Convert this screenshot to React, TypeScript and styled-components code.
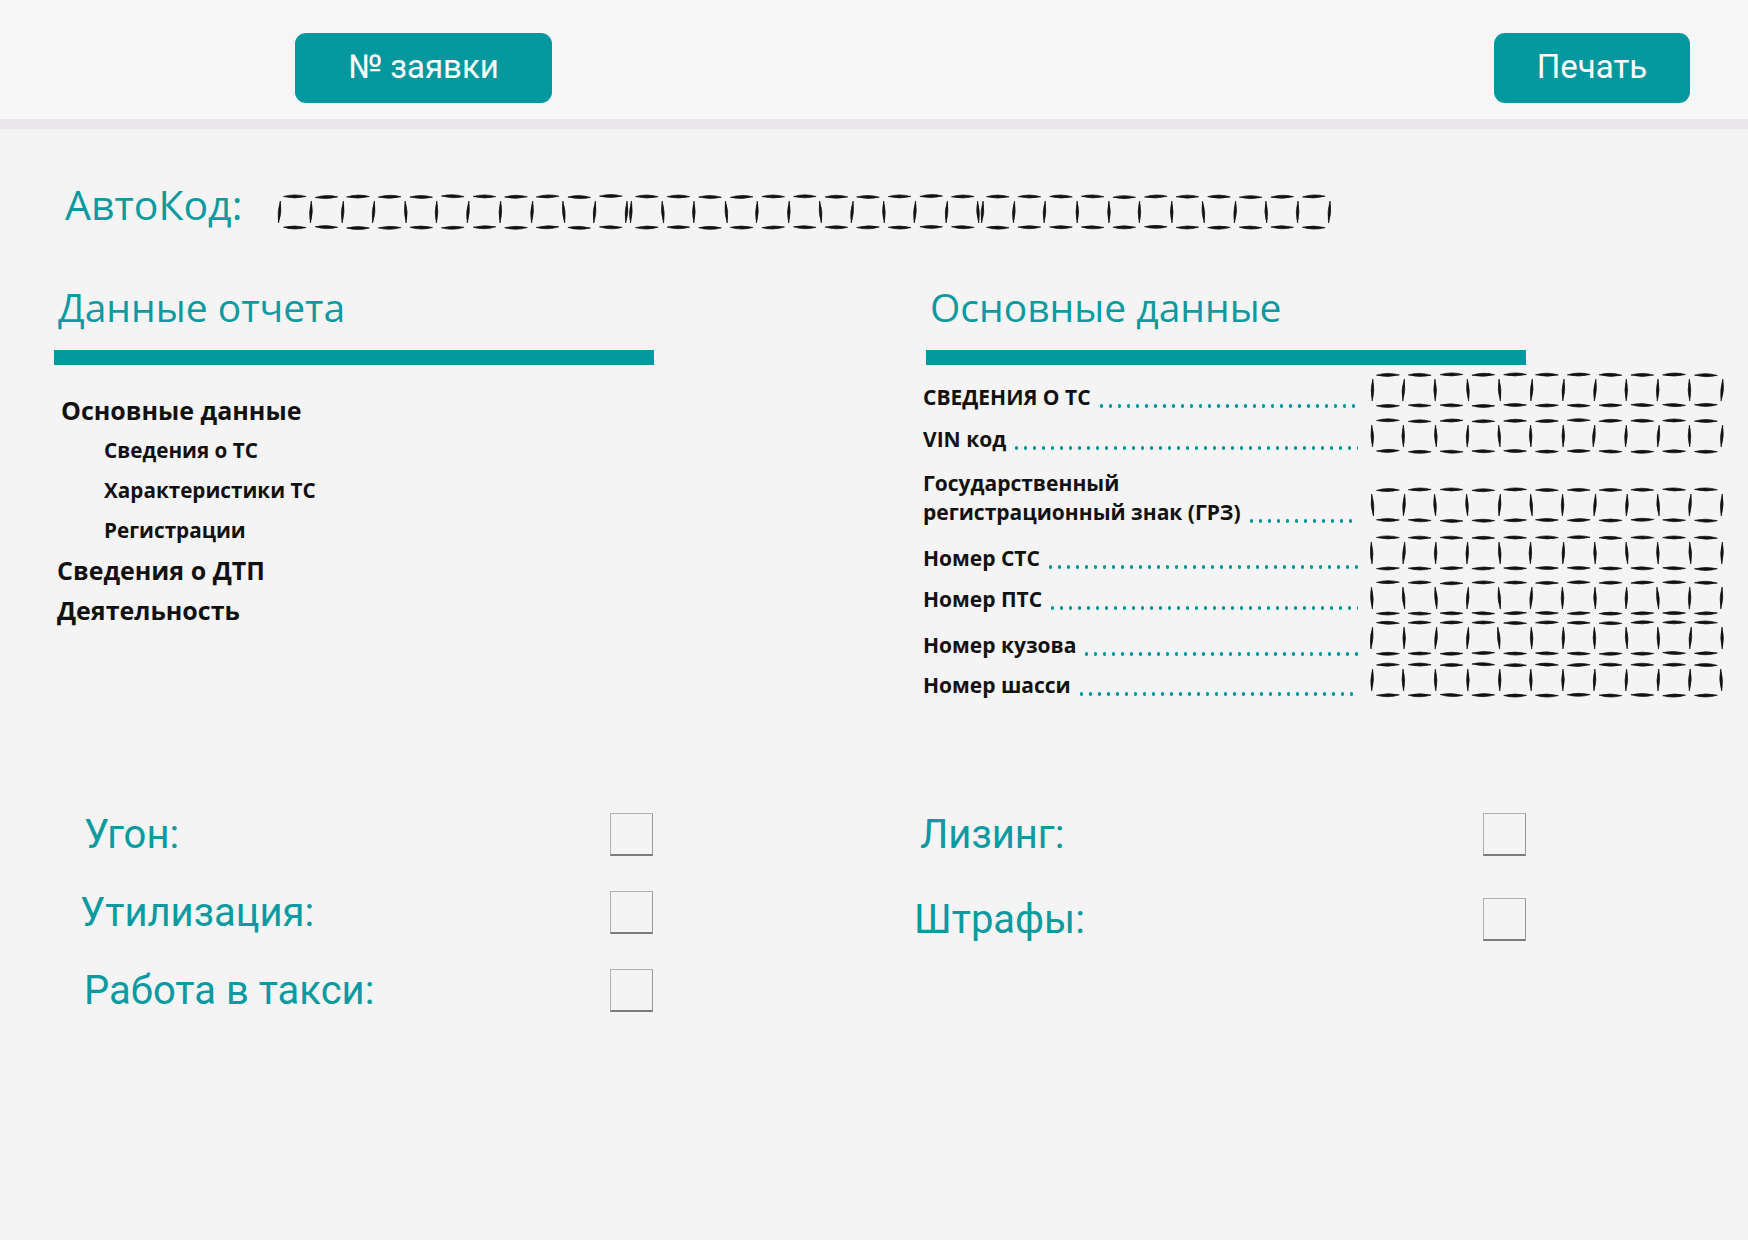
import React from "react";
import styled, { createGlobalStyle } from "styled-components";

const TEAL = "#03989e";
const TEAL_TEXT = "#0a9aa0";

const GlobalStyle = createGlobalStyle`
  html, body {
    margin: 0;
    padding: 0;
    background: #f4f4f4;
  }
  body {
    font-family: "Open Sans", "Noto Sans", sans-serif;
  }
`;

// pseudo random, stable between renders, for the hand-drawn look of the boxes
const jitter = (a: number, b: number) => {
  const s = Math.sin(a * 12.9898 + b * 78.233) * 43758.5453;
  return s - Math.floor(s) - 0.5;
};

// a stroke that is thick in the middle and thin at the ends, like a pen line
const lens = (x1: number, y1: number, x2: number, y2: number, bow: number, t: number) => {
  const mx = (x1 + x2) / 2;
  const my = (y1 + y2) / 2;
  const dx = x2 - x1;
  const dy = y2 - y1;
  const len = Math.hypot(dx, dy) || 1;
  const nx = -dy / len;
  const ny = dx / len;
  const c1x = mx + nx * (bow + t);
  const c1y = my + ny * (bow + t);
  const c2x = mx + nx * (bow - t);
  const c2y = my + ny * (bow - t);
  return `M${x1} ${y1} Q${c1x} ${c1y} ${x2} ${y2} Q${c2x} ${c2y} ${x1} ${y1}Z`;
};

interface combProps {
  cells?: number;
  cw?: number;
  h?: number;
  seed?: number;
}

const CombBoxes = ({ cells = 11, cw = 31.6, h = 36, seed = 0 }: combProps) => {
  const w = cells * cw + 4;
  const parts: string[] = [];

  for (let i = 0; i < cells; i++) {
    const x0 = 2 + i * cw;
    const k = i + seed * 17;
    const t = 2.8 + jitter(k, 1) * 0.8;
    const b = h - 2.8 + jitter(k, 4) * 0.8;
    parts.push(lens(x0 + 4.5, t + jitter(k, 2) * 0.9, x0 + cw - 4.5, t + jitter(k, 3) * 0.9, -0.3, 3));
    parts.push(lens(x0 + 4.5, b + jitter(k, 5) * 0.9, x0 + cw - 4.5, b + jitter(k, 6) * 0.9, 0.3, 3));
  }

  for (let i = 0; i <= cells; i++) {
    const x = 2 + i * cw + jitter(i + seed * 17, 7) * 1.2;
    const tilt = jitter(i + seed * 17, 8) * 1.8;
    parts.push(lens(x + tilt, 7, x - tilt, h - 7, jitter(i + seed * 17, 9) * 0.8, 2.6));
  }

  return (
    <svg width={w} height={h} viewBox={`0 0 ${w} ${h}`}>
      <path d={parts.join(" ")} fill="#111" stroke="#111" strokeWidth={0.7} strokeLinejoin="round" />
    </svg>
  );
};

interface fieldType {
  label: React.ReactNode;
  h: number;
  lift?: number;
}

const fields: fieldType[] = [
  { label: "СВЕДЕНИЯ О ТС", h: 43 },
  { label: "VIN код", h: 46, lift: 4 },
  {
    label: (
      <>
        Государственный
        <br />
        регистрационный знак (ГРЗ)
      </>
    ),
    h: 69,
  },
  { label: "Номер СТС", h: 48, lift: 2 },
  { label: "Номер ПТС", h: 45, lift: 6 },
  { label: "Номер кузова", h: 40 },
  { label: "Номер шасси", h: 42, lift: 2 },
];

const reportItems = [
  { text: "Основные данные", sub: false, indent: 7 },
  { text: "Сведения о ТС", sub: true, indent: 50 },
  { text: "Характеристики ТС", sub: true, indent: 50 },
  { text: "Регистрации", sub: true, indent: 50 },
  { text: "Сведения о ДТП", sub: false, indent: 3 },
  { text: "Деятельность", sub: false, indent: 3 },
];

const App = () => {
  return (
    <Page>
      <GlobalStyle />
      <Header>
        <HeaderButton $w={257}>№ заявки</HeaderButton>
        <HeaderButton $w={196}>Печать</HeaderButton>
      </Header>

      <AutoCodeRow>
        <AutoCodeLabel>АвтоКод:</AutoCodeLabel>
        <CombGroup>
          <CombBoxes seed={1} />
          <CombBoxes seed={2} />
          <CombBoxes seed={3} />
        </CombGroup>
      </AutoCodeRow>

      <Columns>
        <section>
          <SectionTitle>Данные отчета</SectionTitle>
          <SectionBar />
          <ReportList>
            {reportItems.map((item, idx) => (
              <ReportItem key={idx} $sub={item.sub} $indent={item.indent}>
                {item.text}
              </ReportItem>
            ))}
          </ReportList>
        </section>

        <section>
          <SectionTitle>Основные данные</SectionTitle>
          <SectionBar />
          <div>
            {fields.map((field, idx) => (
              <FieldRow key={idx} $h={field.h}>
                <FieldLabel $lift={field.lift ?? 0}>
                  <FieldText>{field.label}</FieldText>
                  <Dots />
                </FieldLabel>
                <CombBoxes cells={11} cw={31.8} h={36} seed={idx + 5} />
              </FieldRow>
            ))}
          </div>
        </section>
      </Columns>

      <CheckGrid>
        <CheckColumn $gap={35}>
          <CheckRow>
            <CheckLabel>Угон:</CheckLabel>
            <CheckBox type="checkbox" />
          </CheckRow>
          <CheckRow>
            <CheckLabel $shift={-4}>Утилизация:</CheckLabel>
            <CheckBox type="checkbox" />
          </CheckRow>
          <CheckRow>
            <CheckLabel>Работа в такси:</CheckLabel>
            <CheckBox type="checkbox" />
          </CheckRow>
        </CheckColumn>
        <CheckColumn $gap={42}>
          <CheckRow>
            <CheckLabel $shift={6}>Лизинг:</CheckLabel>
            <CheckBox type="checkbox" />
          </CheckRow>
          <CheckRow>
            <CheckLabel>Штрафы:</CheckLabel>
            <CheckBox type="checkbox" />
          </CheckRow>
        </CheckColumn>
      </CheckGrid>
    </Page>
  );
};

const Page = styled.div`
  width: 1748px;
  min-height: 1240px;
  background: #f4f4f4;
`;

const Header = styled.header`
  height: 129px;
  box-sizing: border-box;
  padding: 33px 58px 0 295px;
  display: flex;
  justify-content: space-between;
  align-items: flex-start;
  background: #f6f6f6;
  border-bottom: 10px solid #ebe6e9;
`;

const HeaderButton = styled.button<{ $w: number }>`
  width: ${(p) => p.$w}px;
  height: 70px;
  padding: 0 0 4px;
  border: none;
  border-radius: 11px;
  background: ${TEAL};
  color: #fff;
  font-family: Roboto, "Liberation Sans", sans-serif;
  font-size: 33px;
  cursor: pointer;
`;

const AutoCodeRow = styled.div`
  display: flex;
  align-items: flex-start;
  margin-top: 65px;
  padding-left: 65px;
  height: 36px;
`;

const AutoCodeLabel = styled.span`
  width: 214px;
  margin-top: -13px;
  font-size: 41px;
  line-height: 46px;
  color: ${TEAL_TEXT};
`;

const CombGroup = styled.div`
  display: flex;
  margin-left: -2px;
`;

const Columns = styled.div`
  display: grid;
  grid-template-columns: 600px 800px;
  column-gap: 272px;
  padding-left: 54px;
  margin-top: 54px;
`;

const SectionTitle = styled.h2`
  margin: 0 0 0 4px;
  font-size: 39px;
  line-height: 46px;
  font-weight: 400;
  color: ${TEAL_TEXT};
`;

const SectionBar = styled.div`
  width: 600px;
  height: 15px;
  margin-top: 20px;
  background: ${TEAL};
`;

const ReportList = styled.ul`
  list-style: none;
  margin: 25px 0 0;
  padding: 0;
`;

const ReportItem = styled.li<{ $sub: boolean; $indent: number }>`
  height: 40px;
  line-height: 40px;
  padding-left: ${(p) => p.$indent}px;
  font-size: ${(p) => (p.$sub ? 20.7 : 25)}px;
  font-weight: 700;
  color: #111;
`;

const FieldRow = styled.div<{ $h: number }>`
  height: ${(p) => p.$h}px;
  display: grid;
  grid-template-columns: 432px 356px;
  column-gap: 12px;
  align-items: end;
`;

const FieldLabel = styled.div<{ $lift: number }>`
  display: flex;
  align-items: flex-end;
  margin: 0 0 ${(p) => p.$lift - 4}px -3px;
`;

const FieldText = styled.span`
  font-size: 21px;
  line-height: 29px;
  font-weight: 700;
  color: #111;
  white-space: nowrap;
`;

const Dots = styled.span`
  flex: 1;
  height: 4px;
  margin: 0 0 4px 6px;
  background: radial-gradient(circle, ${TEAL} 1.6px, transparent 2px) 0 0 / 9px 4px repeat-x;
`;

const CheckGrid = styled.div`
  display: grid;
  grid-template-columns: 569px 612px;
  column-gap: 261px;
  padding-left: 84px;
  margin-top: 115px;
`;

const CheckColumn = styled.div<{ $gap: number }>`
  display: flex;
  flex-direction: column;
  gap: ${(p) => p.$gap}px;
`;

const CheckRow = styled.label`
  display: flex;
  justify-content: space-between;
  align-items: center;
  height: 43px;
`;

const CheckLabel = styled.span<{ $shift?: number }>`
  margin-left: ${(p) => p.$shift ?? 0}px;
  font-family: Roboto, "Liberation Sans", sans-serif;
  font-size: 40px;
  line-height: 43px;
  color: ${TEAL_TEXT};
`;

const CheckBox = styled.input`
  appearance: none;
  width: 43px;
  height: 43px;
  margin: 0;
  box-sizing: border-box;
  background: #f4f4f4;
  border: 1px solid #b0b0b0;
  border-bottom: 2px solid #7c7c7c;
  border-right-color: #9a9a9a;
  cursor: pointer;

  &:checked {
    background: ${TEAL};
  }
`;

export default App;
